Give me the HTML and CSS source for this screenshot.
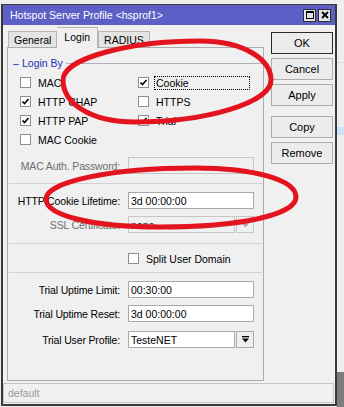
FILE: index.html
```html
<!DOCTYPE html>
<html>
<head>
<meta charset="utf-8">
<link rel="stylesheet" href="styles.css">
</head>
<body>
<div class="window">
  <div class="titlebar">
    <span class="title">Hotspot Server Profile &lt;hsprof1&gt;</span>
    <div class="tbtns">
      <span class="tb"><svg width="10" height="10" viewBox="0 0 10 10"><rect x="1.5" y="1.5" width="7" height="7" fill="none" stroke="#000" stroke-width="1"/><rect x="1" y="1" width="8" height="2" fill="#000"/></svg></span>
      <span class="tb"><svg width="10" height="10" viewBox="0 0 10 10"><path d="M2 2 L8 8 M8 2 L2 8" stroke="#000" stroke-width="1.8"/></svg></span>
    </div>
  </div>
  <div class="client">
    <div class="main">
      <div class="tabs">
        <div class="tab">General</div>
        <div class="tab active">Login</div>
        <div class="tab">RADIUS</div>
      </div>
      <div class="panel">
        <div class="section-head"><span class="dash">–</span><span class="sh-text">Login By</span><span class="sh-line"></span></div>
        <div class="checks">
          <div class="chk"><span class="box"></span><span class="lbl">MAC</span></div>
          <div class="chk"><span class="box"><svg width="9" height="9" viewBox="0 0 9 9"><path d="M1.5 4.5 L3.5 6.5 L7.5 2" fill="none" stroke="#000" stroke-width="1.6"/></svg></span><span class="lbl focus">Cookie</span></div>
          <div class="chk"><span class="box"><svg width="9" height="9" viewBox="0 0 9 9"><path d="M1.5 4.5 L3.5 6.5 L7.5 2" fill="none" stroke="#000" stroke-width="1.6"/></svg></span><span class="lbl">HTTP CHAP</span></div>
          <div class="chk"><span class="box"></span><span class="lbl">HTTPS</span></div>
          <div class="chk"><span class="box"><svg width="9" height="9" viewBox="0 0 9 9"><path d="M1.5 4.5 L3.5 6.5 L7.5 2" fill="none" stroke="#000" stroke-width="1.6"/></svg></span><span class="lbl">HTTP PAP</span></div>
          <div class="chk"><span class="box"><svg width="9" height="9" viewBox="0 0 9 9"><path d="M1.5 4.5 L3.5 6.5 L7.5 2" fill="none" stroke="#000" stroke-width="1.6"/></svg></span><span class="lbl">Trial</span></div>
          <div class="chk"><span class="box"></span><span class="lbl">MAC Cookie</span></div>
        </div>

        <div class="frow r-mac">
          <span class="flabel disabled">MAC Auth. Password:</span>
          <span class="field disabled"></span>
        </div>
        <div class="sep s1"></div>
        <div class="frow r-cookie">
          <span class="flabel">HTTP Cookie Lifetime:</span>
          <span class="field">3d 00:00:00</span>
        </div>
        <div class="frow r-ssl">
          <span class="flabel disabled">SSL Certificate:</span>
          <span class="field short disabled">none</span>
          <span class="ddbtn disabled"><svg width="7" height="7" viewBox="0 0 7 7"><rect x="0" y="0" width="7" height="1.3" fill="#a8a8a8"/><path d="M0 2.5 L7 2.5 L3.5 6.5 Z" fill="#a8a8a8"/></svg></span>
        </div>
        <div class="sep s2"></div>
        <div class="frow r-split">
          <span class="flabel"></span>
          <div class="chk"><span class="box"></span><span class="lbl">Split User Domain</span></div>
        </div>
        <div class="sep s3"></div>
        <div class="frow r-limit">
          <span class="flabel">Trial Uptime Limit:</span>
          <span class="field">00:30:00</span>
        </div>
        <div class="frow r-reset">
          <span class="flabel">Trial Uptime Reset:</span>
          <span class="field">3d 00:00:00</span>
        </div>
        <div class="frow r-profile">
          <span class="flabel">Trial User Profile:</span>
          <span class="field short">TesteNET</span>
          <span class="ddbtn"><svg width="7" height="7" viewBox="0 0 7 7"><rect x="0" y="0" width="7" height="1.3" fill="#000"/><path d="M0 2.5 L7 2.5 L3.5 6.5 Z" fill="#000"/></svg></span>
        </div>
      </div>
    </div>
    <div class="buttons">
      <div class="btn default">OK</div>
      <div class="btn">Cancel</div>
      <div class="btn">Apply</div>
      <div class="btn gap">Copy</div>
      <div class="btn">Remove</div>
    </div>
  </div>
  <div class="status">default</div>
</div>
<svg class="annot" width="344" height="407" viewBox="0 0 344 407">
  <path d="M63,80 C63,58 130,41 200,41 C245,41 271,60 271,80 C271,103 205,122 135,122 C90,122 63,103 63,80 Z" fill="none" stroke="#e3141e" stroke-width="5"/>
  <path d="M46,199 C46,182 110,168 195,168 C255,168 296,180 296,197 C296,215 240,227 160,227 C90,227 46,215 46,199 Z" fill="none" stroke="#e3141e" stroke-width="5"/>
</svg>
</body>
</html>
```

FILE: styles.css
```css
* { box-sizing: border-box; }

body {
  margin: 0;
  width: 344px;
  height: 407px;
  overflow: hidden;
  position: relative;
  font-family: "Liberation Sans", Arial, sans-serif;
  font-size: 10.5px;
  color: #000;
  background:
    linear-gradient(#cfe3f7, #cfe3f7) 337px 127px / 7px 8px no-repeat,
    linear-gradient(#d9d9d9, #d9d9d9) 337px 62px / 7px 1px no-repeat,
    linear-gradient(#7d7d7d, #7d7d7d) 337px 372px / 7px 35px no-repeat,
    #eeeeee;
}

.window {
  margin: 4px 0 0 1px;
  width: 336px;
  height: 402px;
  border: 2px solid #3a3a3a;
  border-top-width: 1px;
  background: #f0f0f0;
  display: flex;
  flex-direction: column;
}

.titlebar {
  height: 20px;
  flex: none;
  background: #5b5fc6;
  color: #fff;
  display: flex;
  align-items: center;
  justify-content: space-between;
  padding: 0 4px 0 7px;
}

.tbtns { display: flex; gap: 2px; }

.tb {
  width: 13px;
  height: 13px;
  background: #e4e4e4;
  border: 1px solid #2e2e2e;
  display: flex;
  align-items: center;
  justify-content: center;
}

.client {
  height: 358px;
  flex: none;
  display: flex;
  gap: 7px;
  padding: 2px 2px 0 4px;
}

.main {
  width: 257px;
  display: flex;
  flex-direction: column;
}

.tabs {
  height: 20px;
  display: flex;
  align-items: flex-end;
  padding-left: 1px;
}

.tab {
  height: 16px;
  padding: 0 5px;
  border: 1px solid #b5b5b5;
  border-bottom: none;
  background: #e4e4e4;
  display: flex;
  align-items: center;
}

.tab.active {
  height: 21px;
  margin-bottom: -1px;
  padding: 0 7px 3px;
  background: #f0f0f0;
  position: relative;
  z-index: 1;
  border-left: none;
}

.panel {
  height: 334px;
  border: 1px solid #acacac;
  background: #f0f0f0;
  display: flex;
  flex-direction: column;
}

.section-head {
  margin-top: 8px;
  height: 14px;
  display: flex;
  align-items: center;
  padding-left: 5px;
  color: #1f2fb4;
}

.dash { width: 6px; margin-right: 3px; }

.sh-line {
  flex: 1;
  height: 1px;
  background: #b0b0b0;
  margin: 0 1px 0 3px;
}

.checks {
  margin-top: 3px;
  padding-left: 12px;
  display: grid;
  grid-template-columns: 118px 1fr;
  grid-auto-rows: 19px;
}

.chk {
  display: flex;
  align-items: center;
}

.box {
  width: 11px;
  height: 11px;
  border: 1px solid #8f8f8f;
  background: #fff;
  display: flex;
  align-items: center;
  justify-content: center;
  flex: none;
}

.lbl {
  margin-left: 5px;
  padding: 0 1px;
  border: 1px solid transparent;
  line-height: 12px;
}

.lbl.focus {
  border: 1px dotted #000;
  width: 96px;
}

.frow {
  display: flex;
  align-items: center;
  height: 17px;
}

.flabel {
  width: 112px;
  margin-right: 8px;
  text-align: right;
  letter-spacing: -0.15px;
  white-space: nowrap;
}

.flabel.disabled { color: #6d6d6d; }

.field {
  width: 126px;
  height: 17px;
  border: 1px solid #a9a9a9;
  background: #fff;
  padding: 0 2px;
  display: flex;
  align-items: center;
}

.field.disabled {
  background: #f0f0f0;
  border-color: #c6c6c6;
  color: #2a2a2a;
}

.field.short { width: 107px; }

.ddbtn {
  width: 18px;
  height: 17px;
  margin-left: 1px;
  border: 1px solid #a9a9a9;
  background: #f0f0f0;
  display: flex;
  align-items: center;
  justify-content: center;
}

.ddbtn.disabled { border-color: #c6c6c6; }

.sep {
  height: 1px;
  background: #d3d3d3;
  margin: 0 1px;
}

.r-mac { margin-top: 8px; }
.s1 { margin-top: 9px; }
.r-cookie { margin-top: 8px; }
.r-ssl { margin-top: 7px; }
.s2 { margin-top: 10px; }
.r-split { margin-top: 8px; height: 13px; }
.s3 { margin-top: 7px; }
.r-limit { margin-top: 8px; }
.r-reset { margin-top: 7px; }
.r-profile { margin-top: 9px; }

.buttons {
  width: 62px;
  padding-top: 5px;
  display: flex;
  flex-direction: column;
  gap: 4px;
}

.btn {
  height: 22px;
  border: 1px solid #adadad;
  background: #ececec;
  display: flex;
  align-items: center;
  justify-content: center;
  font-size: 11px;
}

.btn.default { border-color: #2b2b2b; }
.btn.gap { margin-top: 6px; }

.status {
  height: 20px;
  margin: 0 1px 1px 0;
  border: 1px solid #c4c4c4;
  color: #9c9c9c;
  padding-left: 4px;
  display: flex;
  align-items: center;
}

.annot {
  position: absolute;
  left: 0;
  top: 0;
  pointer-events: none;
}
```
